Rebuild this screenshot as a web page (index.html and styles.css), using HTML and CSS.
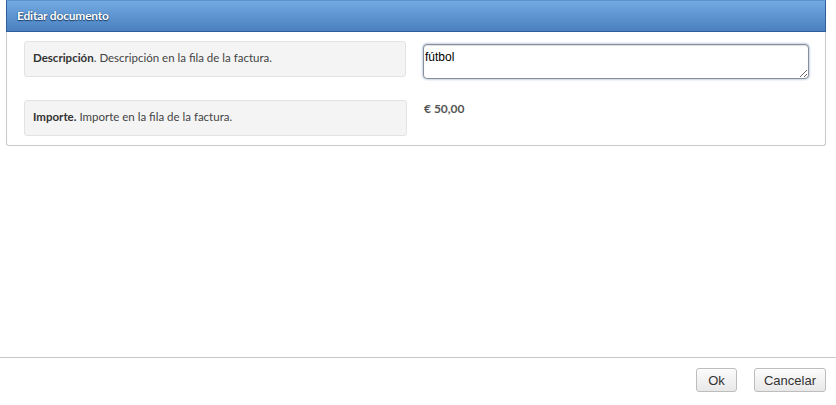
FILE: index.html
```html
<!DOCTYPE html>
<html lang="es">
<head>
  <meta charset="UTF-8" />
  <title>Editar documento</title>
  <link rel="stylesheet" href="styles.css">
</head>
<body>
  <div class="dialog">
    <div class="panel">
      <div class="panel-header">Editar documento</div>
      <div class="panel-body">
        <div class="field-row">
          <div class="field-label"><strong>Descripción</strong>. Descripción en la fila de la factura.</div>
          <div class="field-value">
            <textarea class="field-input">fútbol</textarea>
          </div>
        </div>
        <div class="field-row">
          <div class="field-label"><strong>Importe.</strong> Importe en la fila de la factura.</div>
          <div class="field-value">
            <span class="amount">€ 50,00</span>
          </div>
        </div>
      </div>
    </div>
  </div>

  <div class="footer">
    <button class="btn btn-ok">Ok</button>
    <button class="btn">Cancelar</button>
  </div>
</body>
</html>
```

FILE: styles.css
```css
html, body {
  height: 100%;
}

body {
  margin: 0;
  font-family: Lato, "Open Sans", sans-serif;
  font-size: 11.5px;
  color: #333;
  background: #fff;
  display: flex;
  flex-direction: column;
}

.dialog {
  flex: 1;
  padding: 0 10px 0 6px;
}

.panel {
  border: 1px solid #c9c9c9;
  border-top: none;
  border-radius: 0 0 3px 3px;
}

.panel-header {
  height: 30px;
  line-height: 30px;
  padding: 0 10px;
  margin: 0 -1px;
  background: linear-gradient(#72aae2, #4a80bf);
  border: 1px solid #2f5f98;
  border-top-color: #5c91cc;
  color: #fff;
  font-weight: bold;
  font-size: 12px;
  letter-spacing: -0.2px;
  text-shadow: 0 1px 1px #163a66, 0 0 1px #1d4574;
}

.panel-body {
  padding: 9px 16px 9px 17px;
}

.field-row {
  display: flex;
  gap: 17px;
  margin-bottom: 21px;
}

.field-row:last-child {
  margin-bottom: 0;
}

.field-label {
  width: 383px;
  height: 36px;
  box-sizing: border-box;
  background: #f4f4f4;
  border: 1px solid #e3e3e3;
  border-radius: 3px;
  padding: 9px 8px;
  color: #444;
}

.field-label strong {
  color: #333;
}

.field-value {
  flex: 1;
  padding-top: 3px;
}

.field-input {
  display: block;
  width: 386px;
  height: 35px;
  box-sizing: border-box;
  margin: 0;
  padding: 5px 1px;
  font-family: "Liberation Sans", Arial, sans-serif;
  font-size: 12px;
  color: #000;
  border: 1px solid #8a8f98;
  border-radius: 4px;
  box-shadow: 0 0 2px 1px #c5d3e6, inset 0 1px 1px #ddd;
  outline: none;
}

.amount {
  display: block;
  line-height: 12px;
  font-weight: bold;
  font-size: 12px;
  color: #555;
}

.footer {
  height: 48px;
  box-sizing: border-box;
  border-top: 1px solid #c8c8c8;
  display: flex;
  justify-content: flex-end;
  align-items: flex-start;
  gap: 17px;
  padding: 10px 10px 0 0;
}

.btn {
  height: 24px;
  padding: 0 9px;
  font-family: "Liberation Sans", Arial, sans-serif;
  font-size: 13px;
  color: #333;
  background: linear-gradient(#fcfcfc, #e8e8e8);
  border: 1px solid #bdbdbd;
  border-radius: 3px;
}

.btn-ok {
  min-width: 41px;
}
```
